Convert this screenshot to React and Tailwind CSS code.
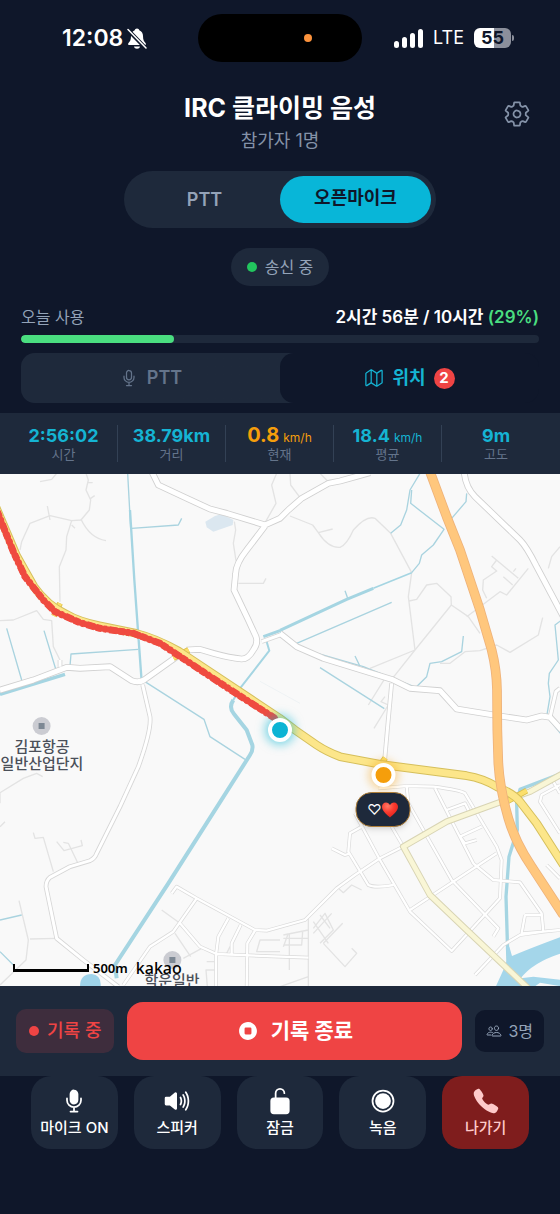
import React, { useState } from 'react';
import {
  IoCall,
  IoLockOpen,
  IoMapOutline,
  IoMic,
  IoMicOutline,
  IoPeopleOutline,
  IoRadioButtonOn,
  IoSettingsOutline,
  IoStopCircle,
  IoVolumeHigh,
} from 'react-icons/io5';

const stats = [
  { label: '시간', value: '2:56:02' },
  { label: '거리', value: '38.79km' },
  { label: '현재', value: '0.8', unit: 'km/h', highlight: true },
  { label: '평균', value: '18.4', unit: 'km/h' },
  { label: '고도', value: '9m' },
];

const controls = [
  { label: '마이크 ON', icon: IoMic },
  { label: '스피커', icon: IoVolumeHigh },
  { label: '잠금', icon: IoLockOpen },
  { label: '녹음', icon: IoRadioButtonOn },
  { label: '나가기', icon: IoCall, danger: true },
];

// Map geometry
const lanes = [
  'M120 35L155 28L170 10M258 10L265 30L258 60L272 90L268 120L243 150L215 152L150 137L90 160L65 215L60 240M265 38H278M272 85L284 77',
  'M243 148Q270 205 318 212M142 108L150 150M215 152L200 200L198 240L178 290L180 395M215 165L225 175',
  'M0 452L40 450L110 422L130 448L155 452L160 530L180 570M703 155L707 180L700 220L708 272M715 340H790L798 325M830 10L815 45L828 100L797 155',
  'M870 10L872 45L898 80M960 10L982 32M870 138L938 165L955 188L998 177M955 188Q985 235 1020 232Q1040 225 1060 180Q1100 135 1125 145L1172 190L1235 308L1225 380L1245 540',
  'M1227 393L1250 388L1280 345L1310 340L1353 380L1354 405L1245 540L1175 628M1354 405L1405 440L1440 490M1110 595L1245 540M1400 440L1500 365L1520 375L1585 295',
  'M1475 258L1555 325M1490 270L1475 290L1490 303L1450 330L1448 360L1460 385M1510 320L1538 345M1540 305L1548 295M1680 230L1655 260L1645 295',
  'M1320 580H1350L1395 545L1440 542L1490 525L1530 547L1615 495L1628 443M1153 628L1105 705M1165 705L1122 775M1165 705L1143 695L1155 680',
  'M0 1000V968L70 925L110 910L128 920M0 1070L15 1055M100 1088L105 1105L130 1102L160 1205M170 1115L192 1142L247 1127L243 1110M190 1117L205 1120L233 1178',
  'M57 1292L85 1410L78 1470L0 1545M90 1407L170 1405M485 1320L540 1360M525 1390L572 1460M550 1465L605 1435M840 1410H780L770 1445H840',
  'M925 1345V1550M850 1395L925 1380M850 1430L865 1390M850 1405H925M850 1425H905L908 1385M868 1390V1500M840 1550L925 1520M940 1355L985 1420M940 1375L975 1330L1000 1380L960 1420M960 1335L990 1375M995 1330L940 1390',
  'M970 1420L1035 1490L1070 1450L1055 1435M970 1420L1028 1360M1015 1255L1030 1268L1055 1245L1085 1260M680 1450L690 1430M620 1475H645M622 1550L618 1500H648',
];

const streets = [
  'M515 1270L530 1250L590 1285L765 1380L800 1382L915 1350L1010 1255L1065 1215L1140 1165L1205 1132',
  'M590 1285L520 1385L450 1430L370 1545M540 1360L600 1430L650 1452L840 1460L925 1463M685 1345L655 1400L648 1455V1560M722 1365L695 1420V1452M765 1382L742 1420L740 1560',
  'M995 1135L1035 1155L1050 1150M1085 1070L1050 1090L1045 1145L1105 1245Q1125 1255 1180 1245M1065 1030L1140 1170L1230 1325L1355 1443L1500 1285L1505 1170L1490 1130L1395 970Q1380 960 1300 950L1220 948L1135 955',
  'M1220 948L1225 1000L1355 1230L1495 1375L1480 1400M1175 1070L1210 1130M1230 1320L1490 1150M1305 955L1420 1180L1480 1230L1560 1237L1625 1330L1630 1385M1340 1020L1395 1000L1410 1030M1380 1100L1445 1070M1380 1100L1395 1120L1430 1110',
  'M1575 1335L1565 1390L1630 1385L1680 1380M1575 1335H1625M1425 1515L1510 1425L1560 1395L1630 1385M1680 945L1625 975L1620 995L1680 1090M1660 935L1680 970M1640 1185L1680 1225',
];

const roads = [
  'M448 -10L475 45L560 85L630 117L680 130L795 165L840 145L865 120L905 85L985 40L1020 33L1110 8',
  'M795 168L740 240Q708 280 707 310L702 360L745 450L768 500Q775 520 760 540Q745 567 725 567Q690 564 640 550L600 538L560 540',
  'M0 660L100 630L200 592L240 595L330 590L395 632Q415 640 432 630L530 560',
  'M1392 0Q1395 50 1425 80L1560 210Q1580 230 1610 290L1690 440',
  'M840 490L890 530L970 565L1175 628L1230 655L1320 662L1370 717L1500 738L1580 750L1625 738L1650 742L1685 780',
];

const smallRoads = [
  'M428 645L450 740Q455 780 415 890L360 1010L290 1150Q285 1165 270 1172L210 1190L150 1222Q138 1232 138 1250L170 1405L250 1470L355 1550',
  'M1175 640L1162 780L1154 870M1650 742L1668 665L1680 655M785 515L840 495M180 590V570',
];

const streams = [
  'M383 10L392 175M395 175L535 165L545 145M20 475L65 630M132 482L168 600M210 588L213 552L415 538M890 520L1175 397M1065 558L1078 585M960 593L1153 716',
  'M1235 308L1258 280L1265 255L1300 225L1332 178L1232 100L1235 60M1260 10L1230 60L1220 120L1202 165L1172 190M1400 70L1398 95L1355 145M0 1350L65 1335M0 1445L40 1485M1035 362L1043 385',
  'M840 485L900 535L1090 590L1165 620L1248 652L1280 620L1290 580L1325 575L1385 545L1390 498',
  'M430 632L612 748L630 800L735 868M1685 450L1665 465L1675 570L1648 610L1645 640L1650 680L1640 740L1690 800',
];

const mainRoad = 'M-15 105L50 258L102 350Q142 406 196 431Q236 455 298 467L408 490Q468 505 537 544L838 744L885 780L950 825Q980 845 1020 860L1140 883L1400 917Q1450 925 1490 950Q1540 970 1560 995L1610 1060L1690 1185';
const mainStubs = 'M162 438L180 400M520 564L566 540M1144 880L1156 864M1520 995L1580 962';
const sideRoad = 'M1690 910L1590 965L1490 1000L1340 1055L1210 1130L1290 1275L1400 1380L1590 1560';
const highway = 'M1288 0L1340 140L1380 240L1440 420L1475 540Q1490 600 1491 660L1492 780L1495 880Q1500 960 1525 1045Q1545 1115 1595 1190L1690 1335';
const track = 'M-8 125L18 190L40 245L75 320L130 390L165 425L240 458L300 475L400 490L480 520L530 553L700 665L825 745';

function MapDrawing() {
  return (
    <svg
      className="absolute inset-0 h-full w-full"
      viewBox="0 12 1680 1536"
      preserveAspectRatio="xMidYMid slice"
      fill="none"
      strokeLinejoin="round"
      aria-hidden="true"
    >
      <rect width="1680" height="1560" fill="#f9f9f9" />
      <g stroke="#e3e3e3" strokeWidth="4">
        {lanes.map((d) => <path key={d} d={d} />)}
      </g>
      <path d="M616 155L645 138L665 132L700 150L698 165L640 185L620 172Z" fill="#dbe7f0" />
      <path d="M780 634L900 700" stroke="#e8eff2" strokeWidth="2" />
      <g stroke="#a9d3df" strokeWidth="4">
        {streams.map((d) => <path key={d} d={d} />)}
      </g>
      <g stroke="#a5d5e2">
        <path d="M390 120L403 330L425 635" strokeWidth="7" />
        <path d="M0 673L195 613" strokeWidth="10" />
        <path d="M840 482L790 500M840 481L1040 388L1120 355" strokeWidth="9" />
        <path d="M1120 355L1235 308" strokeWidth="5" />
        <path d="M800 515L808 542L720 655L700 690" strokeWidth="6" />
        <path d="M700 690Q685 712 702 732L740 780L757 825Q760 840 750 855L505 1240L345 1485L350 1525" strokeWidth="12" />
        <path d="M1690 908L1560 958L1550 1000L1552 1080L1527 1160L1518 1280L1524 1480" strokeWidth="10" />
      </g>
      <path d="M240 1550Q240 1512 275 1512Q305 1515 302 1550Z" fill="#9fd3e9" />
      <path
        d="M1485 1555L1510 1500L1522 1470L1518 1430H1528L1536 1458Q1590 1435 1690 1398V1448Q1600 1475 1562 1525L1600 1520L1690 1530V1550L1620 1538L1590 1560Z"
        fill="#a4d6ea"
      />

      <g stroke="#dadada" strokeWidth="11">
        {streets.map((d) => <path key={d} d={d} />)}
      </g>
      <g stroke="#d6d6d6" strokeWidth="14">
        {smallRoads.map((d) => <path key={d} d={d} />)}
      </g>
      <g stroke="#d0d0d0" strokeWidth="20">
        {roads.map((d) => <path key={d} d={d} />)}
      </g>
      <g stroke="#ffffff">
        {streets.map((d) => <path key={d} d={d} strokeWidth="7" />)}
        {smallRoads.map((d) => <path key={d} d={d} strokeWidth="9" />)}
        {roads.map((d) => <path key={d} d={d} strokeWidth="15" />)}
      </g>

      <path d={sideRoad} stroke="#d8d4b4" strokeWidth="20" />
      <path d={sideRoad} stroke="#f9f6d6" strokeWidth="14" />
      <path d={mainStubs} stroke="#d9bd4b" strokeWidth="18" />
      <path d={mainStubs} stroke="#fbdf6b" strokeWidth="13" />
      <path d={mainRoad} stroke="#d5bf5c" strokeWidth="26" />
      <path d={mainRoad} stroke="#fce68a" strokeWidth="20" />
      <path d={highway} stroke="#eeb27a" strokeWidth="29" />
      <path d={highway} stroke="#ffc77d" strokeWidth="24" />
      <path d={track} stroke="#ef4b40" strokeWidth="18" strokeLinecap="round" />
      <path d={track} stroke="#ef4b40" strokeWidth="21" strokeDasharray="17 6 9 8 24 5" />
    </svg>
  );
}

function PoiDot() {
  return (
    <span className="flex h-[18px] w-[18px] items-center justify-center rounded-full bg-[#cbccd2]">
      <span className="h-[6px] w-[6px] bg-[#7d8894]" />
    </span>
  );
}

function HeartEmoji() {
  return (
    <svg className="h-4 w-[17px]" viewBox="0 0 34 32" role="img" aria-label="❤️">
      <defs>
        <radialGradient id="heart" cx="0.35" cy="0.25" r="0.8">
          <stop offset="0" stopColor="#ff7a66" />
          <stop offset="0.5" stopColor="#fb3b2f" />
          <stop offset="1" stopColor="#dd1f1a" />
        </radialGradient>
      </defs>
      <path
        d="M17 31C12 26 1 19 1 9.500C1 4.500 4.500 1 9 1C12.500 1 15.500 3 17 6.500C18.500 3 21.500 1 25 1C29.500 1 33 4.500 33 9.500C33 19 22 26 17 31Z"
        fill="url(#heart)"
      />
    </svg>
  );
}

function BellOffIcon() {
  return (
    <svg className="h-[21px] w-5" viewBox="0 0 40 42" fill="none" aria-hidden="true">
      <path
        d="M20 1C17.500 1 16 2.500 15.500 4.500C10.500 6.500 8 11 8 16C8 24 6 27 3 30C1.500 32 2 34 4 34H36C38 34 38.500 32 37 30C34 27 32 24 32 16C32 11 29.500 6.500 24.500 4.500C24 2.500 22.500 1 20 1Z"
        fill="white"
      />
      <path d="M14 37H26C25.500 40 23 41.500 20 41.500S14.500 40 14 37Z" fill="white" />
      <path d="M0 2L38 41" stroke="#0f172a" strokeWidth="8" />
      <path d="M2 3L38 40" stroke="white" strokeWidth="3" strokeLinecap="round" />
    </svg>
  );
}

function StatusBar() {
  return (
    <div className="grid grid-cols-[1fr_164px_1fr] items-center pt-[14px] text-white">
      <div className="flex items-center gap-1 pl-[62px]">
        <span className="text-[23px] leading-6 font-semibold">12:08</span>
        <BellOffIcon />
      </div>
      <div className="flex h-12 items-center justify-end rounded-full bg-black pr-[50px]">
        <span className="h-2 w-2 rounded-full bg-[#fb923c]" />
      </div>
      <div className="flex items-center justify-end pr-[46px]">
        <div className="flex items-end gap-[3px]">
          <span className="h-[7px] w-[5px] rounded-sm bg-white" />
          <span className="h-[11px] w-[5px] rounded-sm bg-white" />
          <span className="h-[15px] w-[5px] rounded-sm bg-white" />
          <span className="h-[19px] w-[5px] rounded-sm bg-white" />
        </div>
        <span className="ml-[10px] text-[18px] leading-6">LTE</span>
        <div className="ml-[10px] flex h-5 w-[37px] items-center justify-center rounded-md bg-linear-to-r from-white from-55% to-[#8b8f9b] to-55% text-[18px] leading-5 font-bold text-[#0f172a]">
          55
        </div>
        <span className="ml-px h-[6px] w-[2px] rounded-r-sm bg-[#8b8f9b]" />
      </div>
    </div>
  );
}

export default function App() {
  const [micMode, setMicMode] = useState('open');
  const [tab, setTab] = useState('location');
  const usedPercent = 29.5;

  const modeClass = (active) =>
    active ? 'bg-[#08b6d8] text-[#0f172a]' : 'text-[#94a3b8]';
  const tabClass = (active) =>
    active ? 'bg-[#0f172a] text-[#15b4d3]' : 'text-[#64748b]';

  return (
    <div className="flex min-h-screen flex-col bg-[#0f172a] font-['Inter','Noto_Sans_CJK_KR',sans-serif]">
      <StatusBar />

      <header className="mt-[30px] grid grid-cols-[1fr_auto_1fr] items-start px-[29px]">
        <div className="col-start-2 flex flex-col items-center gap-[5px]">
          <h1 className="text-[25px] leading-8 font-bold text-white">IRC 클라이밍 음성</h1>
          <p className="text-[18px] leading-6 text-[#8492a8]">참가자 1명</p>
        </div>
        <button type="button" aria-label="설정" className="mt-2 justify-self-end text-[#8492a8]">
          <IoSettingsOutline className="h-7 w-7" />
        </button>
      </header>

      <div className="mt-[18px] flex w-[312px] self-center rounded-full bg-[#1e293b] p-[5px]">
        <button
          type="button"
          onClick={() => setMicMode('ptt')}
          className={`h-[47px] flex-1 rounded-full text-[18px] leading-6 font-semibold ${modeClass(micMode === 'ptt')}`}
        >
          PTT
        </button>
        <button
          type="button"
          onClick={() => setMicMode('open')}
          className={`h-[47px] flex-1 rounded-full pb-1 text-[18px] leading-6 font-semibold ${modeClass(micMode === 'open')}`}
        >
          오픈마이크
        </button>
      </div>

      <div className="mt-5 flex h-[38px] items-center gap-2 self-center rounded-full bg-[#1e293b] px-4">
        <span className="h-[10px] w-[10px] rounded-full bg-[#22c55e]" />
        <span className="text-[16px] leading-6 text-[#94a3b8]">송신 중</span>
      </div>

      <section className="mt-[19px] px-[21px]">
        <div className="flex items-center justify-between leading-6">
          <span className="text-[16px] text-[#94a3b8]">오늘 사용</span>
          <span className="text-[17px] font-semibold text-white">
            2시간 56분 / 10시간 <span className="text-[#4ade80]">(29%)</span>
          </span>
        </div>
        <div className="mt-[6px] h-2 overflow-hidden rounded-full bg-[#1e293b]">
          <div className="h-full rounded-full bg-[#4ade80]" style={{ width: `${usedPercent}%` }} />
        </div>
      </section>

      <nav className="mx-[21px] mt-[10px] flex rounded-[14px] bg-linear-to-r from-[#1e293b] from-60% to-[#0f172a] to-60%">
        <button
          type="button"
          onClick={() => setTab('ptt')}
          className={`flex h-[50px] flex-1 items-center justify-center gap-2 rounded-[14px] text-[18px] leading-6 font-semibold ${tabClass(tab === 'ptt')}`}
        >
          <IoMicOutline className="h-5 w-5" />
          PTT
        </button>
        <button
          type="button"
          onClick={() => setTab('location')}
          className={`flex h-[50px] flex-1 items-center justify-center gap-2 rounded-[14px] text-[18px] leading-6 font-semibold ${tabClass(tab === 'location')}`}
        >
          <IoMapOutline className="h-5 w-5" />
          위치
          <span className="flex h-[21px] w-[21px] items-center justify-center rounded-full bg-[#ef4444] text-[15px] font-bold text-white">
            2
          </span>
        </button>
      </nav>

      <dl className="mt-[10px] grid grid-cols-5 divide-x divide-[#334155] bg-[#1e293b] px-[10px] py-3">
        {stats.map((stat) => (
          <div
            key={stat.label}
            className={`flex flex-col-reverse items-center justify-end ${stat.highlight ? 'text-[#f59e0b]' : 'text-[#15b4d3]'}`}
          >
            <dt className="text-[13px] leading-4 text-[#64748b]">{stat.label}</dt>
            <dd className="flex h-[21px] items-baseline gap-1 font-bold whitespace-nowrap">
              <span className={stat.highlight ? 'text-[20px] leading-[21px]' : 'text-[18px] leading-[21px]'}>
                {stat.value}
              </span>
              {stat.unit && <span className="text-[12px] leading-4 font-normal">{stat.unit}</span>}
            </dd>
          </div>
        ))}
      </dl>

      <main className="relative min-h-[320px] flex-1 overflow-hidden bg-[#f9f9f9]">
        <MapDrawing />

        <div className="absolute top-[49.300%] left-[42px] flex -translate-x-1/2 -translate-y-[9px] flex-col items-center gap-[3px]">
          <PoiDot />
          <p className="text-center text-[15px] leading-[17px] font-medium whitespace-nowrap text-[#4b5059]">
            김포항공
            <br />
            일반산업단지
          </p>
        </div>
        <div className="absolute bottom-[-3px] left-[172px] flex -translate-x-1/2 flex-col items-center gap-[3px]">
          <PoiDot />
          <p className="text-[15px] leading-[17px] font-medium whitespace-nowrap text-[#4b5059]">학운일반</p>
        </div>

        <div className="absolute bottom-[10px] left-[13px] flex items-center gap-1 text-black">
          <span className="h-2 w-[76px] border-x-2 border-b-[3px] border-black" />
          <span className="font-['Noto_Sans',sans-serif] text-[13px] leading-4 font-semibold">500m</span>
          <span className="ml-1 font-['Noto_Sans',sans-serif] text-[16px] leading-4 font-medium">kakao</span>
        </div>

        <span className="absolute top-1/2 left-1/2 h-6 w-6 -translate-1/2 rounded-full border-4 border-white bg-[#0cb4d4] shadow-[0_0_10px_3px_#06b6d480]" />

        <div className="absolute top-[58.800%] left-[383px] flex -translate-x-1/2 -translate-y-3 flex-col items-center gap-[5px]">
          <span className="h-6 w-6 rounded-full border-4 border-white bg-[#f59e0b] shadow-[0_0_8px_3px_#f59e0b66]" />
          <span className="flex h-[35px] w-[55px] items-center justify-center rounded-2xl border border-[#b07f38] bg-[#1e293b] text-[14px] leading-4 font-normal text-white shadow-md">
            ♡
            <HeartEmoji />
          </span>
        </div>
      </main>

      <section className="flex items-center gap-[13px] bg-[#1e293b] px-4 py-4">
        <p className="flex h-[44px] items-center gap-2 rounded-[10px] bg-[#3e2d3d] px-[13px] text-[18px] leading-6 font-medium whitespace-nowrap text-[#ef4444]">
          <span className="h-[10px] w-[10px] rounded-full bg-[#ef4444]" />
          기록 중
        </p>
        <button
          type="button"
          className="flex h-[58px] flex-1 items-center justify-center gap-3 rounded-2xl bg-[#ef4444] text-[21px] leading-6 font-bold text-white"
        >
          <IoStopCircle className="h-[22px] w-[22px]" />
          기록 종료
        </button>
        <p className="flex h-[42px] items-center gap-[6px] rounded-[10px] bg-[#0f172a] px-[11px] text-[16px] leading-6 whitespace-nowrap text-[#94a3b8]">
          <IoPeopleOutline className="h-4 w-4" />
          3명
        </p>
      </section>

      <footer className="flex gap-4 px-[31px] pb-[65px]">
        {controls.map(({ label, icon: Icon, danger }) => (
          <button
            key={label}
            type="button"
            className={`flex h-[73px] flex-1 flex-col items-center justify-center gap-[3px] rounded-[20px] text-[15px] leading-5 font-medium whitespace-nowrap ${
              danger ? 'bg-[#7f1d1d] text-[#fecaca]' : 'bg-[#1e293b] text-white'
            }`}
          >
            <Icon className="h-7 w-7" />
            {label}
          </button>
        ))}
      </footer>
    </div>
  );
}
